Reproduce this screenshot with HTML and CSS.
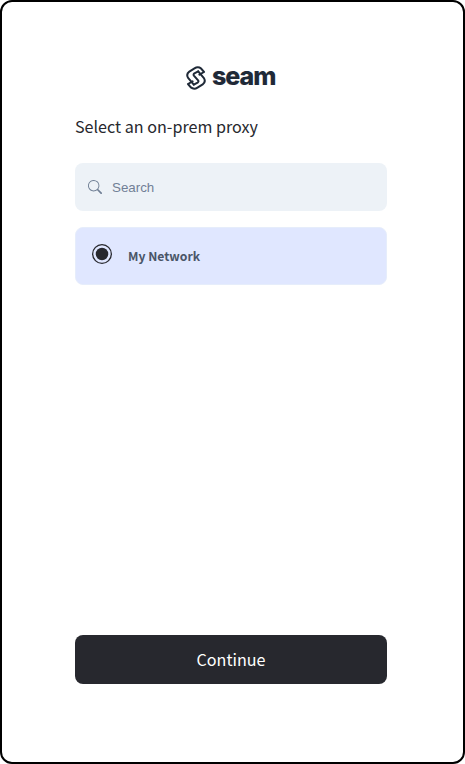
FILE: index.html
```html
<!DOCTYPE html>
<html lang="en">
<head>
<meta charset="utf-8">
<title>Seam</title>
<link rel="stylesheet" href="styles.css">
</head>
<body>
<main class="frame">
  <header class="logo">
    <svg class="mark" viewBox="0 0 20 24" fill="none" stroke="currentColor" stroke-width="2" stroke-linejoin="round" stroke-linecap="round">
      <path d="M12.2 5.4 17.7 11.8Q20.3 15.8 16.7 18.4L11.5 21.6Q8 23.8 4.8 21.4L2 18 6.6 15.4"/>
      <path d="M7.8 18.6 2.3 12.2Q-.3 8.2 3.3 5.6L8.5 2.4Q12 .2 15.2 2.6L18 6 13.4 8.6"/>
      <path d="M12.2 5.4 8.4 7.4Q7 8.4 7.9 9.6L12.1 14.4Q13 15.6 11.6 16.6L7.8 18.6"/>
    </svg>
    <span class="wordmark">seam</span>
  </header>
  <h1 class="title">Select an on-prem proxy</h1>
  <label class="search">
    <svg class="glass" viewBox="0 0 16 16" fill="currentColor"><path d="M11.742 10.344a6.5 6.5 0 1 0-1.397 1.398h-.001c.03.04.062.078.098.115l3.85 3.85a1 1 0 0 0 1.415-1.414l-3.85-3.85a1.007 1.007 0 0 0-.115-.1zM12 6.5a5.5 5.5 0 1 1-11 0 5.5 5.5 0 0 1 11 0z"/></svg>
    <input class="field" type="text" placeholder="Search">
  </label>
  <div class="option">
    <svg class="radio" viewBox="0 0 20 20"><circle cx="10" cy="10" r="9.35" fill="none" stroke="currentColor" stroke-width="1.3"/><circle cx="10" cy="10" r="6.25" fill="currentColor"/></svg>
    <span class="name">My Network</span>
  </div>
  <button class="continue">Continue</button>
</main>
</body>
</html>
```
FILE: styles.css
```css
* { box-sizing: border-box; }
body { margin: 0; background: #fff; font-family: "Noto Sans CJK SC", sans-serif; }
.frame {
  height: 764px;
  display: flex;
  flex-direction: column;
  padding: 62px 76px 78px 73px;
  border: 2px solid #000;
  border-radius: 12px;
}
.logo {
  display: flex;
  align-items: center;
  justify-content: center;
  gap: 5.5px;
  height: 28px;
  color: #1f2937;
}
.mark { width: 20px; height: 24px; }
.wordmark {
  margin-top: -4px;
  font: 800 25px/28px Inter, sans-serif;
  letter-spacing: -0.95px;
  -webkit-text-stroke: 0.1px currentColor;
}
.title {
  margin: 20px 0 0;
  font-size: 16.12px;
  font-weight: 400;
  line-height: 28px;
  color: #27282e;
}
.search {
  display: flex;
  align-items: center;
  gap: 10px;
  height: 48px;
  margin-top: 23px;
  padding: 0 13px;
  border-radius: 8px;
  background: #edf2f7;
  color: #718096;
}
.glass { width: 14px; height: 14px; }
.field {
  flex: 1;
  min-width: 0;
  padding: 0;
  border: 0;
  background: none;
  font: 13.333px "Liberation Sans", sans-serif;
}
.field::placeholder { color: #718096; }
.option {
  display: flex;
  align-items: center;
  gap: 16px;
  height: 58px;
  margin-top: 16px;
  padding: 0 16px;
  border: 1px solid #e6edfb;
  border-radius: 8px;
  background: #e0e7ff;
}
.radio { width: 20px; height: 20px; margin-bottom: 4px; color: #27282e; }
.name { font-size: 12.2px; font-weight: 700; color: #4a5568; }
.continue {
  height: 49px;
  margin-top: auto;
  padding: 0 6px 2px;
  border: 0;
  border-radius: 8px;
  background: #27282e;
  color: #fff;
  font: 400 16.12px "Noto Sans CJK SC", sans-serif;
}
```
